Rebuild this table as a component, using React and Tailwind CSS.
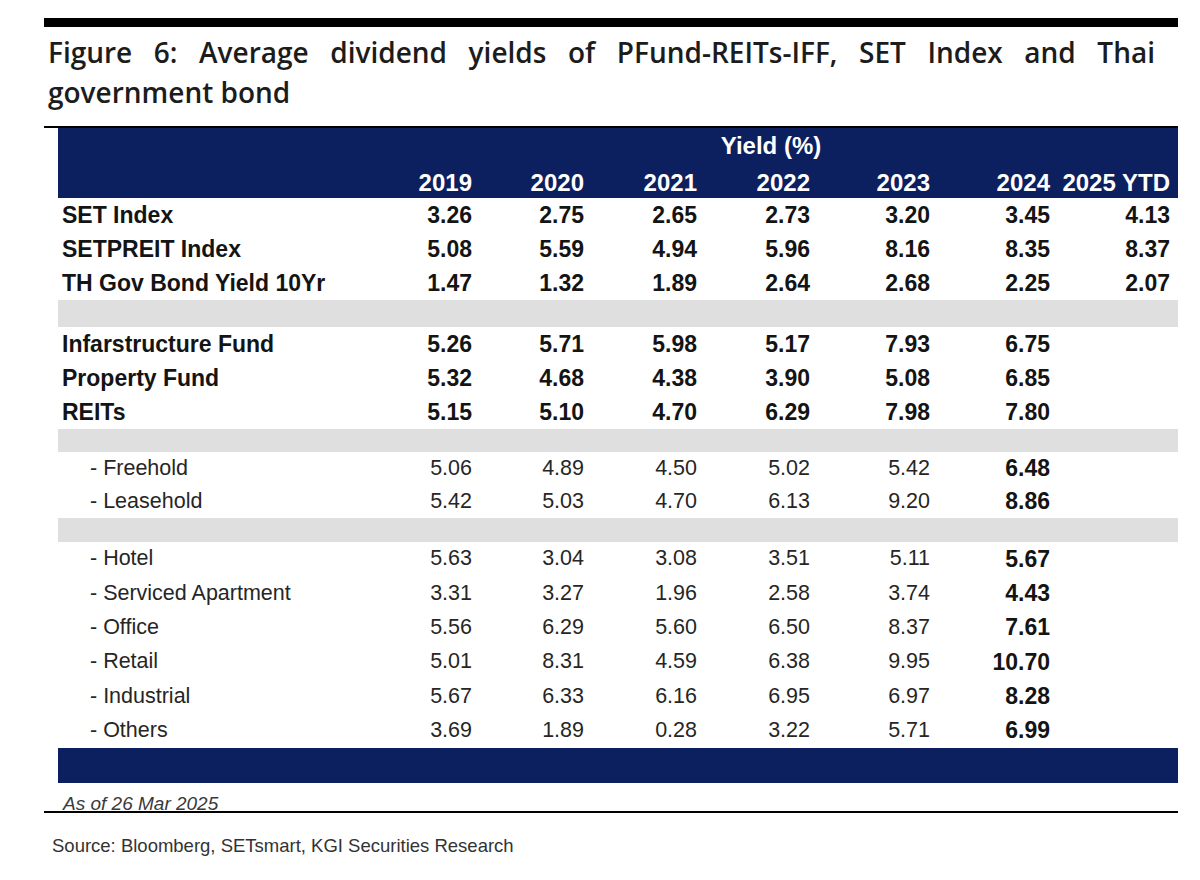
import React from "react";

const TABLE_FONT = "font-['Liberation_Sans',Arial,sans-serif]";

const top = [
  { label: "SET Index", v: ["3.26", "2.75", "2.65", "2.73", "3.20", "3.45", "4.13"] },
  { label: "SETPREIT Index", v: ["5.08", "5.59", "4.94", "5.96", "8.16", "8.35", "8.37"] },
  { label: "TH Gov Bond Yield 10Yr", v: ["1.47", "1.32", "1.89", "2.64", "2.68", "2.25", "2.07"] },
];
const funds = [
  { label: "Infarstructure Fund", v: ["5.26", "5.71", "5.98", "5.17", "7.93", "6.75", ""] },
  { label: "Property Fund", v: ["5.32", "4.68", "4.38", "3.90", "5.08", "6.85", ""] },
  { label: "REITs", v: ["5.15", "5.10", "4.70", "6.29", "7.98", "7.80", ""] },
];
const tenure = [
  { label: "Freehold", v: ["5.06", "4.89", "4.50", "5.02", "5.42", "6.48", ""] },
  { label: "Leasehold", v: ["5.42", "5.03", "4.70", "6.13", "9.20", "8.86", ""] },
];
const sectors = [
  { label: "Hotel", v: ["5.63", "3.04", "3.08", "3.51", "5.11", "5.67", ""] },
  { label: "Serviced Apartment", v: ["3.31", "3.27", "1.96", "2.58", "3.74", "4.43", ""] },
  { label: "Office", v: ["5.56", "6.29", "5.60", "6.50", "8.37", "7.61", ""] },
  { label: "Retail", v: ["5.01", "8.31", "4.59", "6.38", "9.95", "10.70", ""] },
  { label: "Industrial", v: ["5.67", "6.33", "6.16", "6.95", "6.97", "8.28", ""] },
  { label: "Others", v: ["3.69", "1.89", "0.28", "3.22", "5.71", "6.99", ""] },
];

const GRID = "grid grid-cols-[314px_100px_112px_113px_113px_120px_120px_120px] pr-[8px]";

function BoldRow({ r }) {
  return (
    <div className={`${GRID} h-[34px] items-center text-[23px] leading-none font-bold text-[#141414]`}>
      <div className="pl-[4px] whitespace-nowrap">{r.label}</div>
      {r.v.map((x, i) => (
        <div key={i} className="text-right">{x}</div>
      ))}
    </div>
  );
}

function SubRow({ r, h }) {
  return (
    <div className={`${GRID} ${h} items-center text-[21.5px] leading-none text-[#262626]`}>
      <div className="pl-[32px] whitespace-nowrap">- {r.label}</div>
      {r.v.map((x, i) => (
        <div key={i} className={`text-right ${i === 5 ? "font-bold text-[23px] text-[#141414]" : ""}`}>{x}</div>
      ))}
    </div>
  );
}

export default function App() {
  return (
    <div className="w-[1200px] min-h-[880px] bg-white">
      <div className="w-[1178px] pl-[44px] pt-[18px]">
        <div className="h-[9px] bg-black" />
        <div className="mt-[5px] ml-[4px] w-[1107px] font-['Open_Sans',sans-serif] font-semibold text-[28px] leading-[40px] text-[#1c1c1c]">
          <div className="text-justify [text-align-last:justify] whitespace-nowrap">
            Figure 6: Average dividend yields of PFund-REITs-IFF, SET Index and Thai
          </div>
          <div>government bond</div>
        </div>
        <div className="mt-[14px] h-[2px] bg-black" />
        <div className={`ml-[14px] ${TABLE_FONT}`}>
          <div className="bg-[#0c2060] text-white font-bold text-[24px] leading-none">
            <div className={`${GRID} h-[35px] items-center`}>
              <div />
              <div className="col-span-7 text-center">Yield (%)</div>
            </div>
            <div className={`${GRID} h-[35px] items-center pt-[5px]`}>
              <div />
              {["2019", "2020", "2021", "2022", "2023", "2024", "2025 YTD"].map((y) => (
                <div key={y} className="text-right whitespace-nowrap">{y}</div>
              ))}
            </div>
          </div>
          {top.map((r) => (
            <BoldRow key={r.label} r={r} />
          ))}
          <div className="h-[27px] bg-[#dfdfdf]" />
          {funds.map((r) => (
            <BoldRow key={r.label} r={r} />
          ))}
          <div className="h-[23px] bg-[#dfdfdf]" />
          {tenure.map((r) => (
            <SubRow key={r.label} r={r} h="h-[33px]" />
          ))}
          <div className="h-[24px] bg-[#dfdfdf]" />
          {sectors.map((r) => (
            <SubRow key={r.label} r={r} h="h-[34.33px]" />
          ))}
          <div className="h-[35px] bg-[#0c2060]" />
          <div className="h-[28px] flex items-end pl-[5px] text-[19px] leading-none italic text-[#3a3a3a]">
            <span className="translate-y-[2px]">As of 26 Mar 2025</span>
          </div>
        </div>
        <div className="h-[2px] bg-black" />
        <div className="mt-[24px] pl-[8px] font-['Liberation_Sans',sans-serif] text-[18.5px] leading-none text-[#333]">
          Source: Bloomberg, SETsmart, KGI Securities Research
        </div>
      </div>
    </div>
  );
}
